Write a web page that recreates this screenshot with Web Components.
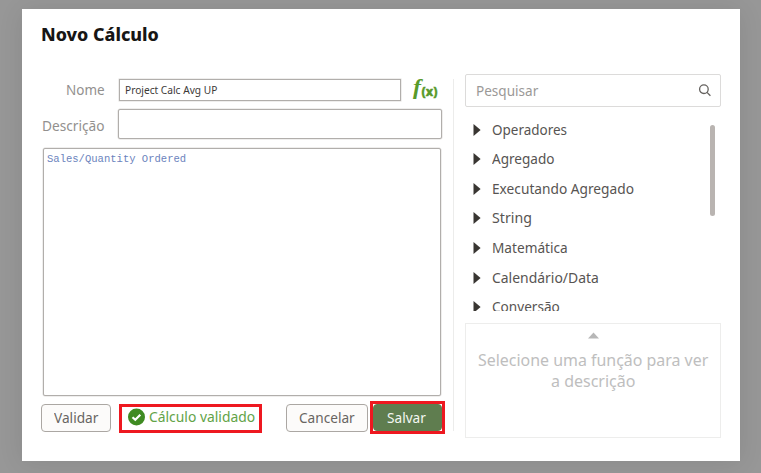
<!DOCTYPE html>
<html lang="pt">
<head>
<meta charset="utf-8">
<title>Novo Cálculo</title>
<style>
html,body{margin:0;height:100%;overflow:hidden;background:#979797;font-family:"Noto Sans","Open Sans",sans-serif}
</style>
</head>
<body>
<calc-dialog></calc-dialog>
<script>
// Single line of text condensed or expanded to the width given in its "w" attribute.
class FitText extends HTMLElement{
  connectedCallback(){
    this.attachShadow({mode:'open'}).innerHTML=`<style>
      :host{display:block;white-space:nowrap;flex:none}
      span{display:inline-block;transform-origin:0 50%;vertical-align:top}
    </style><span><slot></slot></span>`;
    const w=+this.getAttribute('w');
    this.style.width=w+'px';
    const s=this.shadowRoot.querySelector('span');
    s.style.transform=`scaleX(${w/s.offsetWidth})`;
  }
}
customElements.define('fit-text',FitText);

class TextBox extends HTMLElement{
  constructor(){
    super();
    this.attachShadow({mode:'open'}).innerHTML=`<style>
      :host{display:flex;box-sizing:border-box;align-items:center;border:1px solid #b1aeab;border-radius:2px;background:#fff;box-shadow:0 0 0 .5px #e0dedc}
    </style><slot></slot>`;
  }
}
customElements.define('text-box',TextBox);

class PushButton extends HTMLElement{
  constructor(){
    super();
    this.attachShadow({mode:'open'}).innerHTML=`<style>
      :host{display:flex;box-sizing:border-box;height:28px;align-items:center;justify-content:center;border:1px solid #aba7a3;border-radius:4px;background:#fcfbfa;color:#686562;font-size:14px;line-height:20px}
      :host([primary]){background:#5f7d4f;border-color:#5f7d4f;color:#f4f7f2}
    </style><slot></slot>`;
  }
}
customElements.define('push-button',PushButton);

class FunctionGroup extends HTMLElement{
  constructor(){
    super();
    this.attachShadow({mode:'open'}).innerHTML=`<style>
      :host{display:flex;height:29.55px;flex:none;align-items:center;gap:11px;padding-left:8px;font-size:14px;line-height:20px;color:#575452}
      svg{display:block;flex:none}
    </style><svg width="8" height="12" viewBox="0 0 8 12"><path d="M.5 0 7.6 6 .5 12Z" fill="#393632"/></svg><slot></slot>`;
  }
}
customElements.define('function-group',FunctionGroup);

class FunctionPanel extends HTMLElement{
  constructor(){
    super();
    this.attachShadow({mode:'open'}).innerHTML=`<style>
      :host{display:flex;flex-direction:column;width:256px}
      .search{display:flex;box-sizing:border-box;height:33px;border:1px solid #dcdbda;border-radius:2px;align-items:center;justify-content:space-between;padding:0 9px 0 10px;font-size:14px;line-height:20px;color:#9b9997}
      .list{display:flex;height:204px;overflow:hidden;justify-content:space-between}
      .groups{padding-top:8px}
      .bar{width:5px;height:91px;margin:18px 6px 0 0;border-radius:3px;background:#b9b4b1}
      .hint{box-sizing:border-box;height:115px;margin-top:12px;border:1px solid #ededec;display:flex;flex-direction:column;align-items:center;color:#bebebe;font-size:16px;line-height:21px}
      .hint svg{margin:8px 0 11px}
    </style>
    <div class="search"><fit-text w="62">Pesquisar</fit-text>
      <svg width="13" height="13" viewBox="0 0 13 13" fill="none" stroke="#65625f" stroke-width="1.3"><circle cx="5.9" cy="5.2" r="4.3"/><path d="m9 8.4 3.4 3.4"/></svg></div>
    <div class="list"><div class="groups">
      <function-group><fit-text w="75">Operadores</fit-text></function-group>
      <function-group><fit-text w="63">Agregado</fit-text></function-group>
      <function-group><fit-text w="142">Executando Agregado</fit-text></function-group>
      <function-group><fit-text w="39.5">String</fit-text></function-group>
      <function-group><fit-text w="76">Matemática</fit-text></function-group>
      <function-group><fit-text w="106.5">Calendário/Data</fit-text></function-group>
      <function-group><fit-text w="68">Conversão</fit-text></function-group>
    </div><div class="bar"></div></div>
    <div class="hint"><svg width="11" height="7" viewBox="0 0 11 7"><path d="M0 6.5 5.5.5 11 6.5Z" fill="#b7b7b7"/></svg>
      <fit-text w="230">Selecione uma função para ver</fit-text><fit-text w="84">a descrição</fit-text></div>`;
  }
}
customElements.define('function-panel',FunctionPanel);

class CalcForm extends HTMLElement{
  constructor(){
    super();
    this.attachShadow({mode:'open'}).innerHTML=`<style>
      :host{display:flex;flex-direction:column;width:404px;padding-top:5px;font-size:14px;line-height:20px;color:#92908e}
      .row{display:flex;align-items:center}
      .label{width:64px;display:flex;justify-content:flex-end}
      .label fit-text{margin-right:.5px}
      .name{width:282px;height:22px;margin-left:14px;padding-left:5px;font-size:10.5px;line-height:16px;color:#3d3a38;border-radius:0}
      .row svg{margin:0 0 0 9px;overflow:visible}
      .desc{width:324px;height:30px;margin-left:13px}
      .code{width:398px;height:248px;margin:9px 0 0 2px;align-items:flex-start;padding:3px 0 0 3px;font:10.5px/14px "Liberation Mono",monospace;color:#6b83bd}
      .actions{display:flex;margin-top:5px;height:33px;align-items:flex-start}
      .ok{box-sizing:border-box;display:flex;align-items:center;width:143px;height:29px;margin:1px 0 0 8px;padding-left:5px;border:3px solid #ee1820;color:#62a347;gap:4px}
      .frame{box-sizing:border-box;width:75px;height:33px;border:3px solid #ee1820;margin-left:2px;padding:0}
      .frame push-button{width:69px;height:27px}
      .actions .ok{margin-top:3px}
    </style>
    <div class="row"><div class="label"><fit-text w="38.5">Nome</fit-text></div>
      <text-box class="name"><fit-text w="92">Project Calc Avg UP</fit-text></text-box>
      <svg width="30" height="22" fill="#589a2a"><text x="3" y="15" font-family="Liberation Serif,serif" font-style="italic" font-weight="bold" font-size="21" textLength="8" lengthAdjust="spacingAndGlyphs">f</text><text x="11.5" y="17" font-family="Noto Sans,sans-serif" font-weight="800" font-size="12.5" textLength="16" lengthAdjust="spacingAndGlyphs" stroke="#589a2a" stroke-width=".4">(x)</text></svg></div>
    <div class="row" style="margin-top:8px"><div class="label" style="padding-top:3px"><fit-text w="62.5">Descrição</fit-text></div><text-box class="desc"></text-box></div>
    <text-box class="code"><fit-text w="139.5">Sales/Quantity Ordered</fit-text></text-box>
    <div class="actions">
      <push-button style="width:70px;margin-top:3px"><fit-text w="44">Validar</fit-text></push-button>
      <div class="ok"><svg width="18" height="18" viewBox="0 0 18 18" style="flex:none;margin-top:-3px"><circle cx="9.5" cy="9" r="8.5" fill="#3f8b22"/><path d="m5.5 9.2 2.8 2.6 5-5" fill="none" stroke="#fff" stroke-width="2.2"/></svg><fit-text w="106" style="margin-top:-3px">Cálculo validado</fit-text></div>
      <push-button style="width:82px;margin:3px 0 0 24px"><fit-text w="55.5">Cancelar</fit-text></push-button>
      <div class="frame"><push-button primary><fit-text w="39" style="margin-left:-2px">Salvar</fit-text></push-button></div>
    </div>`;
  }
}
customElements.define('calc-form',CalcForm);

class CalcDialog extends HTMLElement{
  constructor(){
    super();
    this.attachShadow({mode:'open'}).innerHTML=`<style>
      :host{display:block;box-sizing:border-box;width:718px;height:452px;margin:9px 0 0 22px;background:#fff;padding:12px 19px 0;box-shadow:0 2px 24px rgba(0,0,0,.09);overflow:visible}
      .title{font-size:18px;line-height:26px;font-weight:800;color:#171615}
      .cols{display:flex;margin-top:27px}
      .rule{width:1px;height:352px;margin:5px 11px 0 8px;background:#ececeb}
    </style>
    <div class="title"><fit-text w="118">Novo Cálculo</fit-text></div>
    <div class="cols"><calc-form></calc-form><div class="rule"></div><function-panel></function-panel></div>`;
  }
}
customElements.define('calc-dialog',CalcDialog);
</script>
</body>
</html>
